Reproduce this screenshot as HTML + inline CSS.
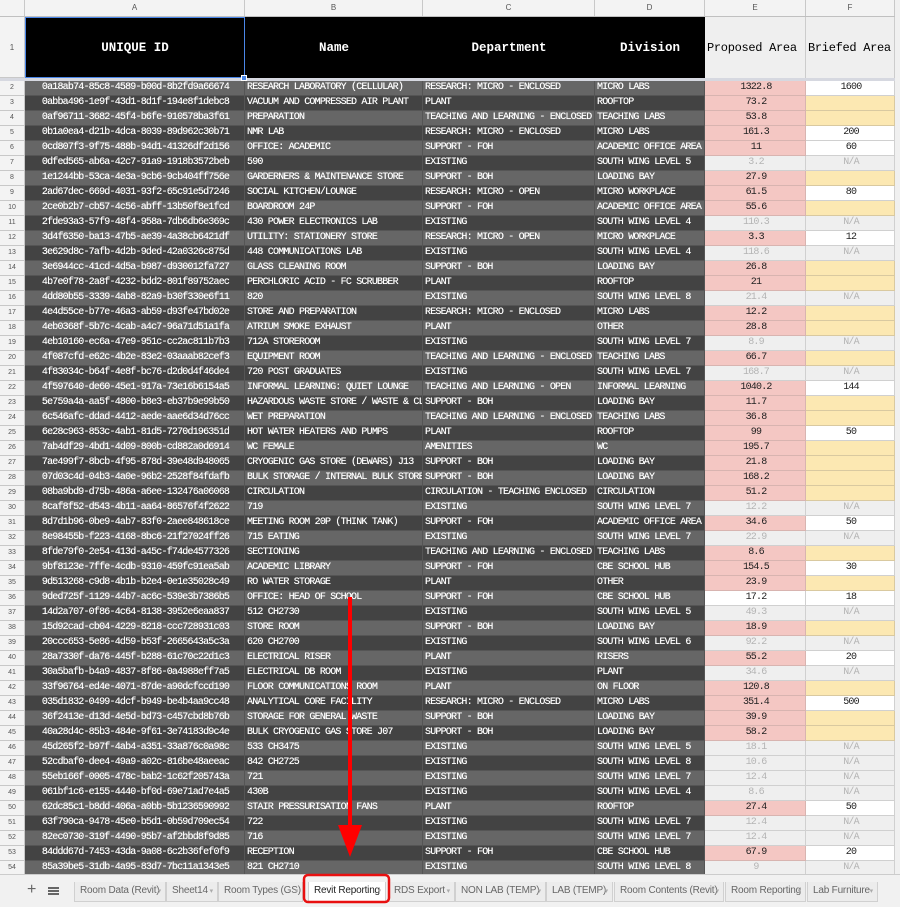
<!DOCTYPE html>
<html><head><meta charset="utf-8"><style>
*{box-sizing:border-box;margin:0;padding:0}
body{width:900px;height:907px;overflow:hidden;background:#fff;position:relative;font-family:"Liberation Mono",monospace}
.hd{position:absolute;left:0;top:0;width:900px;height:17px;display:flex;background:#f3f3f3;border-bottom:1px solid #c0c0c0}
.hd span{border-right:1px solid #c8c8c8;font:8px "Liberation Sans",sans-serif;color:#555;text-align:center;line-height:16px}
.w0{width:25px;flex:none}.wa{width:220px;flex:none}.wb{width:178px;flex:none}.wc{width:172px;flex:none}.wd{width:110px;flex:none}.we{width:101px;flex:none}.wf{width:89px;flex:none}
.h1{position:absolute;left:0;top:17px;width:900px;height:61px;display:flex}
.h1 span{display:flex;align-items:center;justify-content:center;font-weight:bold;font-size:12.5px;color:#fff;background:#000;white-space:nowrap}
.h1 span.n{background:#f3f3f3;color:#555;font:normal 8px "Liberation Sans",sans-serif;border-right:1px solid #c8c8c8;border-bottom:1px solid #c8c8c8}
.h1 span.g{background:#efefef;color:#000;font-weight:normal;font-size:12px;letter-spacing:-0.3px;border-right:1px solid #ccc;overflow:hidden;justify-content:flex-start;padding-left:2px}
.frz{position:absolute;left:0;top:78px;width:900px;height:3px;background:#d6d8e0}
#rows{position:absolute;left:0;top:81px;width:895px}
.r{display:flex;height:15px;line-height:14px;font-size:10px;letter-spacing:-0.8px;color:#fff;background:#666;text-shadow:0 0 0.4px #fff}
.r.d{background:#434343}
.r span{border-right:1px solid #555;border-bottom:1px solid #555;white-space:nowrap;overflow:hidden;padding-left:2px}
.r span:nth-child(1){width:25px;background:#f3f3f3;color:#555;font:7px "Liberation Sans",sans-serif;letter-spacing:0;text-align:center;line-height:14px;border-color:#c8c8c8;padding:0;text-shadow:none}
.r span:nth-child(2){width:220px;text-align:center}
.r span:nth-child(3){width:178px}
.r span:nth-child(4){width:172px}
.r span:nth-child(5){width:110px}
.r span:nth-child(6){width:101px;text-align:center;color:#222;background:#f4c7c3;border-color:#d8b4b0;text-shadow:none}
.r span:nth-child(7){width:89px;text-align:center;color:#222;background:#fce8b2;border-color:#d9c9a0;text-shadow:none}
.r span.w{background:#fff!important;border-color:#d0d0d0!important}
.r span.x{background:#efefef!important;color:#b4b4b4!important;border-color:#d0d0d0!important}
.sb{position:absolute;left:895px;top:0;width:5px;height:876px;background:#f0f0f0}
.bot{position:absolute;left:0;top:874px;width:900px;height:33px;background:#f1f1f1;border-top:1px solid #ccc}
.tab{position:absolute;top:7px;height:20px;border:1px solid #d0d0d0;border-top:none;background:#ececec;font:10px "Liberation Sans",sans-serif;letter-spacing:-0.2px;color:#666;line-height:18px;padding-left:5px;white-space:nowrap;overflow:hidden}
.tab:after{content:"▾";font-size:7px;color:#aaa;position:absolute;right:4px;top:1px}
.tab.a{background:#fff;color:#222}
</style></head><body>
<div class="hd"><span class="w0"></span><span class="wa">A</span><span class="wb">B</span><span class="wc">C</span><span class="wd">D</span><span class="we">E</span><span class="wf">F</span></div>
<div class="h1"><span class="n w0">1</span><span class="wa" style="outline:1px solid #4a86e8;outline-offset:-1px">UNIQUE ID</span><span class="wb">Name</span><span class="wc">Department</span><span class="wd">Division</span><span class="we g">Proposed Area</span><span class="wf g">Briefed Area</span></div>
<div class="frz"></div>
<div style="position:absolute;left:241px;top:75px;width:6px;height:6px;background:#4a86e8;border:1px solid #fff;z-index:3"></div>
<div id="rows">
<div class="r"><span>2</span><span>0a18ab74-85c8-4589-b00d-8b2fd9a66674</span><span>RESEARCH LABORATORY (CELLULAR)</span><span>RESEARCH: MICRO - ENCLOSED</span><span>MICRO LABS</span><span>1322.8</span><span class="w">1600</span></div>
<div class="r d"><span>3</span><span>0abba496-1e9f-43d1-8d1f-194e8f1debc8</span><span>VACUUM AND COMPRESSED AIR PLANT</span><span>PLANT</span><span>ROOFTOP</span><span>73.2</span><span></span></div>
<div class="r"><span>4</span><span>0af96711-3682-45f4-b6fe-910578ba3f61</span><span>PREPARATION</span><span>TEACHING AND LEARNING - ENCLOSED</span><span>TEACHING LABS</span><span>53.8</span><span></span></div>
<div class="r d"><span>5</span><span>0b1a0ea4-d21b-4dca-8039-89d962c30b71</span><span>NMR LAB</span><span>RESEARCH: MICRO - ENCLOSED</span><span>MICRO LABS</span><span>161.3</span><span class="w">200</span></div>
<div class="r"><span>6</span><span>0cd807f3-9f75-488b-94d1-41326df2d156</span><span>OFFICE: ACADEMIC</span><span>SUPPORT - FOH</span><span>ACADEMIC OFFICE AREA</span><span>11</span><span class="w">60</span></div>
<div class="r d"><span>7</span><span>0dfed565-ab6a-42c7-91a9-1918b3572beb</span><span>590</span><span>EXISTING</span><span>SOUTH WING LEVEL 5</span><span class="x">3.2</span><span class="x">N/A</span></div>
<div class="r"><span>8</span><span>1e1244bb-53ca-4e3a-9cb6-9cb404ff756e</span><span>GARDERNERS &amp; MAINTENANCE STORE</span><span>SUPPORT - BOH</span><span>LOADING BAY</span><span>27.9</span><span></span></div>
<div class="r d"><span>9</span><span>2ad67dec-669d-4031-93f2-65c91e5d7246</span><span>SOCIAL KITCHEN/LOUNGE</span><span>RESEARCH: MICRO - OPEN</span><span>MICRO WORKPLACE</span><span>61.5</span><span class="w">80</span></div>
<div class="r"><span>10</span><span>2ce0b2b7-cb57-4c56-abff-13b50f8e1fcd</span><span>BOARDROOM 24P</span><span>SUPPORT - FOH</span><span>ACADEMIC OFFICE AREA</span><span>55.6</span><span></span></div>
<div class="r d"><span>11</span><span>2fde93a3-57f9-48f4-958a-7db6db6e369c</span><span>430 POWER ELECTRONICS LAB</span><span>EXISTING</span><span>SOUTH WING LEVEL 4</span><span class="x">110.3</span><span class="x">N/A</span></div>
<div class="r"><span>12</span><span>3d4f6350-ba13-47b5-ae39-4a38cb6421df</span><span>UTILITY: STATIONERY STORE</span><span>RESEARCH: MICRO - OPEN</span><span>MICRO WORKPLACE</span><span>3.3</span><span class="w">12</span></div>
<div class="r d"><span>13</span><span>3e629d8c-7afb-4d2b-9ded-42a0326c875d</span><span>448 COMMUNICATIONS LAB</span><span>EXISTING</span><span>SOUTH WING LEVEL 4</span><span class="x">118.6</span><span class="x">N/A</span></div>
<div class="r"><span>14</span><span>3e6944cc-41cd-4d5a-b987-d930012fa727</span><span>GLASS CLEANING ROOM</span><span>SUPPORT - BOH</span><span>LOADING BAY</span><span>26.8</span><span></span></div>
<div class="r d"><span>15</span><span>4b7e0f78-2a8f-4232-bdd2-801f89752aec</span><span>PERCHLORIC ACID - FC SCRUBBER</span><span>PLANT</span><span>ROOFTOP</span><span>21</span><span></span></div>
<div class="r"><span>16</span><span>4dd80b55-3339-4ab8-82a9-b30f330e6f11</span><span>820</span><span>EXISTING</span><span>SOUTH WING LEVEL 8</span><span class="x">21.4</span><span class="x">N/A</span></div>
<div class="r d"><span>17</span><span>4e4d55ce-b77e-46a3-ab59-d93fe47bd02e</span><span>STORE AND PREPARATION</span><span>RESEARCH: MICRO - ENCLOSED</span><span>MICRO LABS</span><span>12.2</span><span></span></div>
<div class="r"><span>18</span><span>4eb0368f-5b7c-4cab-a4c7-96a71d51a1fa</span><span>ATRIUM SMOKE EXHAUST</span><span>PLANT</span><span>OTHER</span><span>28.8</span><span></span></div>
<div class="r d"><span>19</span><span>4eb10160-ec6a-47e9-951c-cc2ac811b7b3</span><span>712A STOREROOM</span><span>EXISTING</span><span>SOUTH WING LEVEL 7</span><span class="x">8.9</span><span class="x">N/A</span></div>
<div class="r"><span>20</span><span>4f087cfd-e62c-4b2e-83e2-03aaab82cef3</span><span>EQUIPMENT ROOM</span><span>TEACHING AND LEARNING - ENCLOSED</span><span>TEACHING LABS</span><span>66.7</span><span></span></div>
<div class="r d"><span>21</span><span>4f83034c-b64f-4e8f-bc76-d2d0d4f46de4</span><span>720 POST GRADUATES</span><span>EXISTING</span><span>SOUTH WING LEVEL 7</span><span class="x">168.7</span><span class="x">N/A</span></div>
<div class="r"><span>22</span><span>4f597640-de60-45e1-917a-73e16b6154a5</span><span>INFORMAL LEARNING: QUIET LOUNGE</span><span>TEACHING AND LEARNING - OPEN</span><span>INFORMAL LEARNING</span><span>1040.2</span><span class="w">144</span></div>
<div class="r d"><span>23</span><span>5e759a4a-aa5f-4800-b8e3-eb37b9e99b50</span><span>HAZARDOUS WASTE STORE / WASTE &amp; CL</span><span>SUPPORT - BOH</span><span>LOADING BAY</span><span>11.7</span><span></span></div>
<div class="r"><span>24</span><span>6c546afc-ddad-4412-aede-aae6d34d76cc</span><span>WET PREPARATION</span><span>TEACHING AND LEARNING - ENCLOSED</span><span>TEACHING LABS</span><span>36.8</span><span></span></div>
<div class="r d"><span>25</span><span>6e28c963-853c-4ab1-81d5-7270d196351d</span><span>HOT WATER HEATERS AND PUMPS</span><span>PLANT</span><span>ROOFTOP</span><span>99</span><span class="w">50</span></div>
<div class="r"><span>26</span><span>7ab4df29-4bd1-4d09-800b-cd882a0d6914</span><span>WC FEMALE</span><span>AMENITIES</span><span>WC</span><span>195.7</span><span></span></div>
<div class="r d"><span>27</span><span>7ae499f7-8bcb-4f95-878d-39e48d948065</span><span>CRYOGENIC GAS STORE (DEWARS) J13</span><span>SUPPORT - BOH</span><span>LOADING BAY</span><span>21.8</span><span></span></div>
<div class="r"><span>28</span><span>07d03c4d-04b3-4a0e-96b2-2528f84fdafb</span><span>BULK STORAGE / INTERNAL BULK STORE</span><span>SUPPORT - BOH</span><span>LOADING BAY</span><span>168.2</span><span></span></div>
<div class="r d"><span>29</span><span>08ba9bd9-d75b-486a-a6ee-132476a06068</span><span>CIRCULATION</span><span>CIRCULATION - TEACHING ENCLOSED</span><span>CIRCULATION</span><span>51.2</span><span></span></div>
<div class="r"><span>30</span><span>8caf8f52-d543-4b11-aa64-86576f4f2622</span><span>719</span><span>EXISTING</span><span>SOUTH WING LEVEL 7</span><span class="x">12.2</span><span class="x">N/A</span></div>
<div class="r d"><span>31</span><span>8d7d1b96-0be9-4ab7-83f0-2aee848618ce</span><span>MEETING ROOM 20P (THINK TANK)</span><span>SUPPORT - FOH</span><span>ACADEMIC OFFICE AREA</span><span>34.6</span><span class="w">50</span></div>
<div class="r"><span>32</span><span>8e98455b-f223-4168-8bc6-21f27024ff26</span><span>715 EATING</span><span>EXISTING</span><span>SOUTH WING LEVEL 7</span><span class="x">22.9</span><span class="x">N/A</span></div>
<div class="r d"><span>33</span><span>8fde79f0-2e54-413d-a45c-f74de4577326</span><span>SECTIONING</span><span>TEACHING AND LEARNING - ENCLOSED</span><span>TEACHING LABS</span><span>8.6</span><span></span></div>
<div class="r"><span>34</span><span>9bf8123e-7ffe-4cdb-9310-459fc91ea5ab</span><span>ACADEMIC LIBRARY</span><span>SUPPORT - FOH</span><span>CBE SCHOOL HUB</span><span>154.5</span><span class="w">30</span></div>
<div class="r d"><span>35</span><span>9d513268-c9d8-4b1b-b2e4-0e1e35028c49</span><span>RO WATER STORAGE</span><span>PLANT</span><span>OTHER</span><span>23.9</span><span></span></div>
<div class="r"><span>36</span><span>9ded725f-1129-44b7-ac6c-539e3b7386b5</span><span>OFFICE: HEAD OF SCHOOL</span><span>SUPPORT - FOH</span><span>CBE SCHOOL HUB</span><span class="w">17.2</span><span class="w">18</span></div>
<div class="r d"><span>37</span><span>14d2a707-0f86-4c64-8138-3952e6eaa837</span><span>512 CH2730</span><span>EXISTING</span><span>SOUTH WING LEVEL 5</span><span class="x">49.3</span><span class="x">N/A</span></div>
<div class="r"><span>38</span><span>15d92cad-cb04-4229-8218-ccc728931c03</span><span>STORE ROOM</span><span>SUPPORT - BOH</span><span>LOADING BAY</span><span>18.9</span><span></span></div>
<div class="r d"><span>39</span><span>20ccc653-5e86-4d59-b53f-2665643a5c3a</span><span>620 CH2700</span><span>EXISTING</span><span>SOUTH WING LEVEL 6</span><span class="x">92.2</span><span class="x">N/A</span></div>
<div class="r"><span>40</span><span>28a7330f-da76-445f-b288-61c70c22d1c3</span><span>ELECTRICAL RISER</span><span>PLANT</span><span>RISERS</span><span>55.2</span><span class="w">20</span></div>
<div class="r d"><span>41</span><span>30a5bafb-b4a9-4837-8f86-0a4988eff7a5</span><span>ELECTRICAL DB ROOM</span><span>EXISTING</span><span>PLANT</span><span class="x">34.6</span><span class="x">N/A</span></div>
<div class="r"><span>42</span><span>33f96764-ed4e-4071-87de-a90dcfccd190</span><span>FLOOR COMMUNICATIONS ROOM</span><span>PLANT</span><span>ON FLOOR</span><span>120.8</span><span></span></div>
<div class="r d"><span>43</span><span>035d1832-0499-4dcf-b949-be4b4aa9cc48</span><span>ANALYTICAL CORE FACILITY</span><span>RESEARCH: MICRO - ENCLOSED</span><span>MICRO LABS</span><span>351.4</span><span class="w">500</span></div>
<div class="r"><span>44</span><span>36f2413e-d13d-4e5d-bd73-c457cbd8b76b</span><span>STORAGE FOR GENERAL WASTE</span><span>SUPPORT - BOH</span><span>LOADING BAY</span><span>39.9</span><span></span></div>
<div class="r d"><span>45</span><span>40a28d4c-85b3-484e-9f61-3e74183d9c4e</span><span>BULK CRYOGENIC GAS STORE J07</span><span>SUPPORT - BOH</span><span>LOADING BAY</span><span>58.2</span><span></span></div>
<div class="r"><span>46</span><span>45d265f2-b97f-4ab4-a351-33a876c0a98c</span><span>533 CH3475</span><span>EXISTING</span><span>SOUTH WING LEVEL 5</span><span class="x">18.1</span><span class="x">N/A</span></div>
<div class="r d"><span>47</span><span>52cdbaf0-dee4-49a9-a02c-816be48aeeac</span><span>842 CH2725</span><span>EXISTING</span><span>SOUTH WING LEVEL 8</span><span class="x">10.6</span><span class="x">N/A</span></div>
<div class="r"><span>48</span><span>55eb166f-0005-478c-bab2-1c62f205743a</span><span>721</span><span>EXISTING</span><span>SOUTH WING LEVEL 7</span><span class="x">12.4</span><span class="x">N/A</span></div>
<div class="r d"><span>49</span><span>061bf1c6-e155-4440-bf0d-69e71ad7e4a5</span><span>430B</span><span>EXISTING</span><span>SOUTH WING LEVEL 4</span><span class="x">8.6</span><span class="x">N/A</span></div>
<div class="r"><span>50</span><span>62dc85c1-b8dd-406a-a0bb-5b1236590992</span><span>STAIR PRESSURISATION FANS</span><span>PLANT</span><span>ROOFTOP</span><span>27.4</span><span class="w">50</span></div>
<div class="r d"><span>51</span><span>63f790ca-9478-45e0-b5d1-0b59d709ec54</span><span>722</span><span>EXISTING</span><span>SOUTH WING LEVEL 7</span><span class="x">12.4</span><span class="x">N/A</span></div>
<div class="r"><span>52</span><span>82ec0730-319f-4490-95b7-af2bbd8f9d85</span><span>716</span><span>EXISTING</span><span>SOUTH WING LEVEL 7</span><span class="x">12.4</span><span class="x">N/A</span></div>
<div class="r d"><span>53</span><span>84ddd67d-7453-43da-9a08-6c2b36fef0f9</span><span>RECEPTION</span><span>SUPPORT - FOH</span><span>CBE SCHOOL HUB</span><span>67.9</span><span class="w">20</span></div>
<div class="r"><span>54</span><span>85a39be5-31db-4a95-83d7-7bc11a1343e5</span><span>821 CH2710</span><span>EXISTING</span><span>SOUTH WING LEVEL 8</span><span class="x">9</span><span class="x">N/A</span></div>
</div>
<div class="sb"></div>
<div class="bot">
<div style="position:absolute;left:27px;top:6px;font:16px 'Liberation Sans',sans-serif;color:#666">+</div>
<div style="position:absolute;left:48px;top:12px;width:11px;height:2px;background:#666;box-shadow:0 3px 0 #666,0 6px 0 #666"></div>
<div class="tab" style="left:74px;width:92px">Room Data (Revit)</div>
<div class="tab" style="left:166px;width:52px">Sheet14</div>
<div class="tab" style="left:218px;width:85px">Room Types (GS)</div>
<div class="tab a" style="left:308px;width:78px">Revit Reporting</div>
<div class="tab" style="left:388px;width:67px">RDS Export</div>
<div class="tab" style="left:455px;width:91px">NON LAB (TEMP)</div>
<div class="tab" style="left:546px;width:67px">LAB (TEMP)</div>
<div class="tab" style="left:614px;width:110px">Room Contents (Revit)</div>
<div class="tab" style="left:725px;width:81px">Room Reporting</div>
<div class="tab" style="left:807px;width:71px">Lab Furniture</div>
</div>
<svg style="position:absolute;left:0;top:0" width="900" height="907">
<line x1="350" y1="597" x2="350" y2="830" stroke="#ff0000" stroke-width="4"/>
<polygon points="338,825 362,825 350,857" fill="#ff0000"/>
<rect x="304" y="875" width="85" height="27" rx="4" fill="none" stroke="#e81010" stroke-width="2.5"/>
</svg>
</body></html>
